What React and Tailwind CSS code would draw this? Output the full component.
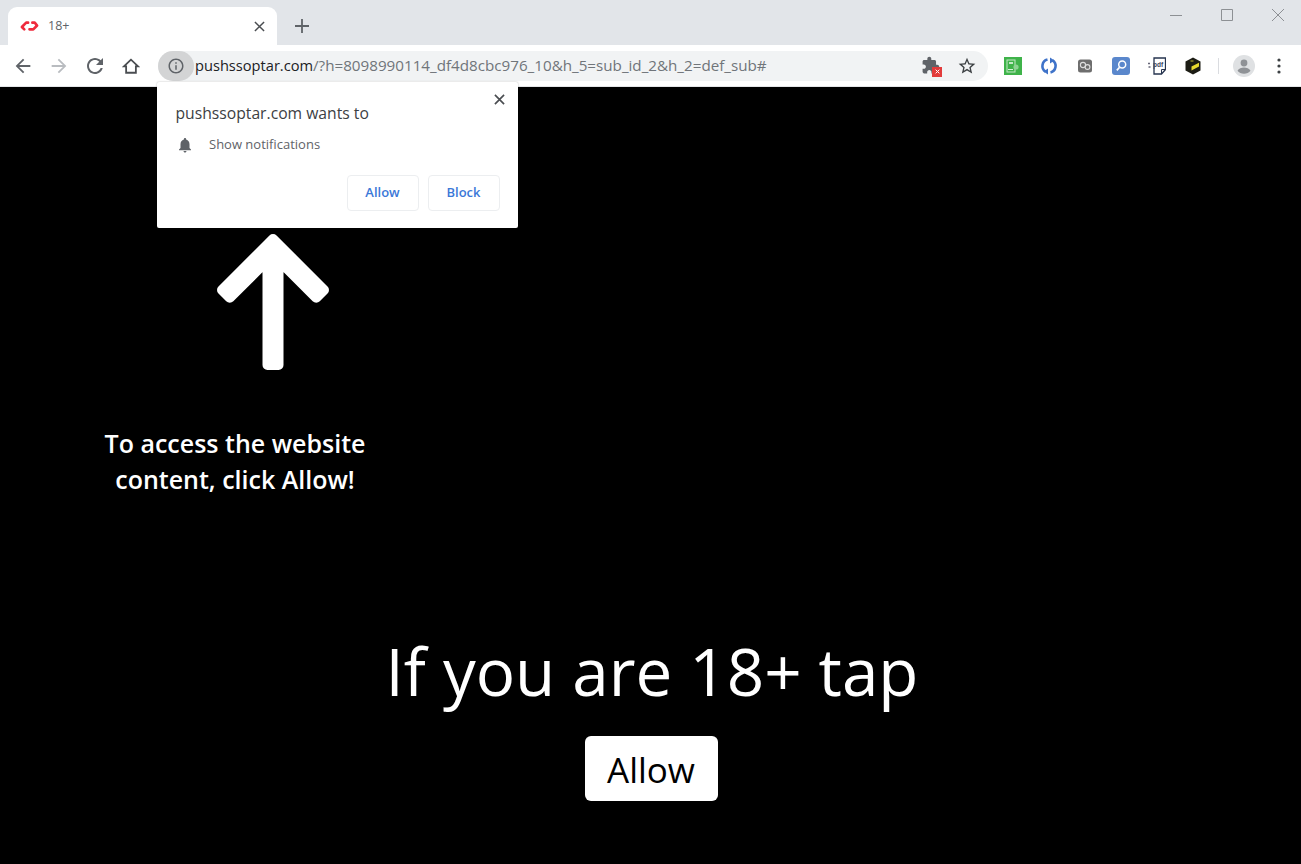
function Mi({ d, className, fill = "currentColor" }) {
  return (
    <svg viewBox="0 0 24 24" className={className} fill={fill}>
      <path d={d} />
    </svg>
  );
}

function Favicon() {
  return (
    <svg viewBox="0 0 20 12" className="w-[19px] h-[12px]" fill="none" strokeWidth="2.8" strokeLinecap="round" strokeLinejoin="round">
      <path d="M8.500 2.500H6.500L2 7l2.500 2.500" stroke="#ef2b3d" />
      <path d="M10 9.500L14 9.500L18 5.500L15.500 2.500H13" stroke="#ef2b3d" />
    </svg>
  );
}

function TabStrip() {
  return (
    <div className="h-[45px] bg-[#e2e5e9] flex items-end relative shrink-0">
      <div className="ml-2 w-[269px] h-[38px] bg-white rounded-t-[9px] flex items-center pl-[12px] pr-[12px]">
        <Favicon />
        <span className="ml-[9px] text-[12.5px] text-[#5f6368] font-['Open_Sans',sans-serif]">18+</span>
        <svg viewBox="0 0 12 12" className="ml-auto w-[11px] h-[11px]" stroke="#4a4d51" strokeWidth="1.6" fill="none">
          <path d="M1 1l10 10M11 1L1 11" />
        </svg>
      </div>
      <svg viewBox="0 0 14 14" className="w-[14px] h-[14px] ml-[18px] mb-[12px]" stroke="#5f6368" strokeWidth="1.8" fill="none">
        <path d="M7 0v14M0 7h14" />
      </svg>
      <div className="ml-auto mr-[-2px] self-start flex items-center h-[30px] text-[#8d9094]">
        <div className="w-[51px] flex justify-center">
          <svg viewBox="0 0 12 12" className="w-[12px] h-[12px]" stroke="currentColor" fill="none"><path d="M0 6.500h12" /></svg>
        </div>
        <div className="w-[51px] flex justify-center">
          <svg viewBox="0 0 12 12" className="w-[12px] h-[12px]" stroke="currentColor" fill="none"><path d="M.5.5h11v11H.5z" /></svg>
        </div>
        <div className="w-[51px] flex justify-center">
          <svg viewBox="0 0 12 12" className="w-[12px] h-[12px]" stroke="currentColor" fill="none"><path d="M0 0l12 12M12 0L0 12" /></svg>
        </div>
      </div>
    </div>
  );
}

function Extensions() {
  return (
    <div className="flex items-center ml-[16px]">
      <svg viewBox="0 0 18 18" className="w-[18px] h-[18px]">
        <rect width="18" height="18" fill="#3fb34a" />
        <rect x="3" y="3" width="8" height="12" fill="none" stroke="#c4e8c6" strokeWidth="1" />
        <rect x="5" y="5" width="4" height="2" fill="#c4e8c6" />
        <circle cx="12" cy="10" r="2.600" fill="#8fd394" />
        <path d="M4 12.500h5" stroke="#d7f0d8" />
      </svg>
      <svg viewBox="0 0 18 18" className="w-[18px] h-[18px] ml-[18px]" fill="none">
        <path d="M7.500 2.600A6.600 6.600 0 0 0 5.500 14.600" stroke="#3f73c9" strokeWidth="2.600" />
        <path d="M10.500 15.400A6.600 6.600 0 0 0 12.500 3.400" stroke="#3f73c9" strokeWidth="2.600" />
        <path d="M8 11.500V17.500L3.500 14.500z" fill="#3f73c9" />
        <path d="M10 6.500V.5L14.500 3.500z" fill="#3f73c9" />
      </svg>
      <svg viewBox="0 0 18 18" className="w-[18px] h-[18px] ml-[18px]">
        <rect x="2" y="2.500" width="14" height="13" rx="2.500" fill="#6e6e6e" />
        <circle cx="7" cy="8" r="2.600" fill="none" stroke="#dedede" strokeWidth="1.100" />
        <circle cx="11.500" cy="10" r="2.400" fill="none" stroke="#dedede" strokeWidth="1.100" />
      </svg>
      <svg viewBox="0 0 18 18" className="w-[18px] h-[18px] ml-[18px]">
        <rect width="18" height="18" rx="3" fill="#5a87cc" />
        <circle cx="10.200" cy="7.500" r="3.500" fill="none" stroke="#fff" strokeWidth="1.500" />
        <path d="M7.600 10.200L4.800 13.400" stroke="#fff" strokeWidth="1.700" />
      </svg>
      <svg viewBox="0 0 18 18" className="w-[18px] h-[18px] ml-[18px]" fill="none">
        <path d="M6 1h11.500v11.500l-4 4.500H6z" fill="#fff" stroke="#26344f" strokeWidth="1.300" />
        <path d="M13.500 17v-4.500h4" stroke="#26344f" strokeWidth="1" />
        <text x="5" y="10" fontSize="6.500" fontWeight="700" fill="#3a4660" fontFamily="'Liberation Sans',sans-serif">pdf</text>
        <path d="M0 6.500h2M.5 10h2" stroke="#667" strokeWidth="1.600" />
      </svg>
      <svg viewBox="0 0 18 18" className="w-[18px] h-[18px] ml-[18px]">
        <path d="M9 0.500l7.500 4v9L9 17.500l-7.500-4v-9z" fill="#1c1c14" />
        <path d="M7.500 9.500l7.500-3.800v3.800L7.500 13.500z" fill="#e8d92e" />
        <path d="M6.500 3h3v2h-3z" fill="#6f6a25" />
      </svg>
    </div>
  );
}

function Toolbar() {
  return (
    <div className="h-[42px] bg-white flex items-center shrink-0 border-b border-[#e4e6e8]">
      <Mi className="w-[22px] h-[22px] ml-[12px] text-[#5f6368]" d="M20 11H7.830l5.590-5.590L12 4l-8 8 8 8 1.410-1.410L7.830 13H20v-2z" />
      <Mi className="w-[22px] h-[22px] ml-[14px] text-[#b9bcc0]" d="M12 4l-1.410 1.410L16.170 11H4v2h12.170l-5.580 5.590L12 20l8-8z" />
      <Mi className="w-[24px] h-[24px] ml-[13px] text-[#5f6368]" d="M17.650 6.350C16.200 4.900 14.210 4 12 4c-4.420 0-7.990 3.580-7.990 8s3.570 8 7.990 8c3.730 0 6.840-2.550 7.730-6h-2.080c-.82 2.330-3.040 4-5.650 4-3.310 0-6-2.690-6-6s2.690-6 6-6c1.660 0 3.140.69 4.220 1.780L13 11h7V4l-2.350 2.350z" />
      <svg viewBox="0 0 24 24" className="w-[18px] h-[18px] ml-[15px] mr-[2px]" fill="none" stroke="#4a4d51" strokeWidth="2.400" strokeLinejoin="miter">
        <path d="M12 3.500L2.500 12.500H5.500V21H18.500V12.500H21.500Z" />
      </svg>
      <div className="ml-[16px] w-[830px] h-[30px] bg-[#f1f3f4] rounded-full flex items-center">
        <div className="w-[36px] h-[30px] bg-[#d3d4d5] rounded-full flex items-center justify-center shrink-0">
          <Mi className="w-[18px] h-[18px] text-[#5f6368]" d="M11 7h2v2h-2zm0 4h2v6h-2zm1-9C6.480 2 2 6.480 2 12s4.480 10 10 10 10-4.480 10-10S17.520 2 12 2zm0 18c-4.410 0-8-3.590-8-8s3.590-8 8-8 8 3.590 8 8-3.590 8-8 8z" />
        </div>
        <span className="ml-[1px] text-[15.2px] whitespace-nowrap font-['Open_Sans',sans-serif] text-[#70757a]">
          <span className="text-[#202124] text-[14.63px]">pushssoptar.com</span>/?h=8098990114_df4d8cbc976_10&amp;h_5=sub_id_2&amp;h_2=def_sub#
        </span>
        <div className="ml-auto flex items-center pr-[11px]">
          <div className="relative w-[20px] h-[20px] mr-[16px]">
            <Mi className="w-[19px] h-[19px] text-[#5f6368]" d="M20.500 11H19V7c0-1.100-.9-2-2-2h-4V3.500C13 2.120 11.880 1 10.500 1S8 2.120 8 3.500V5H4c-1.100 0-1.990.9-1.990 2v3.800H3.500c1.490 0 2.700 1.210 2.700 2.700s-1.210 2.700-2.700 2.700H2V20c0 1.100.9 2 2 2h3.800v-1.500c0-1.490 1.210-2.700 2.700-2.700 1.490 0 2.700 1.210 2.700 2.700V22H17c1.100 0 2-.9 2-2v-4h1.500c1.380 0 2.500-1.120 2.500-2.500S21.880 11 20.500 11z" />
            <div className="absolute right-[-1px] bottom-[-1px] w-[10px] h-[10px] bg-[#e23b3b] flex items-center justify-center">
              <svg viewBox="0 0 8 8" className="w-[5px] h-[5px]" stroke="#fff" strokeWidth="1.600"><path d="M1 1l6 6M7 1L1 7" /></svg>
            </div>
          </div>
          <Mi className="w-[20px] h-[20px] text-[#3c4043]" d="M22 9.240l-7.190-.62L12 2 9.190 8.630 2 9.240l5.460 4.730L5.820 21 12 17.270 18.180 21l-1.630-7.030L22 9.240zM12 15.400l-3.760 2.270 1-4.280-3.320-2.880 4.380-.38L12 6.100l1.710 4.040 4.380.38-3.320 2.880 1 4.280L12 15.400z" />
        </div>
      </div>
      <Extensions />
      <div className="w-px h-[16px] bg-[#dadce0] ml-[16px]" />
      <svg viewBox="0 0 22 22" className="w-[22px] h-[22px] ml-[14px]">
        <circle cx="11" cy="11" r="11" fill="#dfe1e3" />
        <circle cx="11" cy="8" r="3.400" fill="#8f9296" />
        <path d="M4.500 15.800c1.200-2.400 4-3.300 6.500-3.300s5.300.9 6.500 3.300c-1.500 1.900-3.900 3-6.500 3s-5-1.100-6.500-3z" fill="#8f9296" />
      </svg>
      <svg viewBox="0 0 4 16" className="w-[4px] h-[16px] ml-[22px]" fill="#3c4043">
        <circle cx="2" cy="2" r="1.600" /><circle cx="2" cy="8" r="1.600" /><circle cx="2" cy="14" r="1.600" />
      </svg>
    </div>
  );
}

function Popup() {
  return (
    <div className="absolute left-[157px] top-[82px] w-[360.5px] h-[146px] bg-white rounded-[2px] shadow-[0_0_2px_rgba(0,0,0,0.3)] font-['Open_Sans',sans-serif]">
      <svg viewBox="0 0 12 12" className="absolute right-[13px] top-[12px] w-[11px] h-[11px]" stroke="#4a4d51" strokeWidth="1.800" fill="none">
        <path d="M1 1l10 10M11 1L1 11" />
      </svg>
      <div className="pl-[18.5px] pt-[20px] text-[15.7px] leading-[22px] text-[#3c4043]">pushssoptar.com wants to</div>
      <div className="flex items-center pl-[19px] mt-[11px]">
        <Mi className="w-[18px] h-[18px] text-[#5f6368]" d="M12 22c1.100 0 2-.9 2-2h-4c0 1.100.9 2 2 2zm6-6v-5c0-3.070-1.630-5.640-4.500-6.320V4c0-.83-.67-1.500-1.500-1.500s-1.500.67-1.500 1.500v.68C7.640 5.360 6 7.920 6 11v5l-2 2v1h16v-1l-2-2z" />
        <span className="ml-[15px] text-[13px] text-[#5f6368]">Show notifications</span>
      </div>
      <div className="flex justify-end gap-[9px] pr-[18px] mt-[20px]">
        <div className="w-[72px] h-[36px] rounded-[4px] border border-[#eceef0] flex items-center justify-center text-[13px] font-semibold text-[#3b78d8]">Allow</div>
        <div className="w-[72px] h-[36px] rounded-[4px] border border-[#eceef0] flex items-center justify-center text-[13px] font-semibold text-[#3b78d8]">Block</div>
      </div>
    </div>
  );
}

export default function App() {
  return (
    <div className="relative w-[1301px] h-[864px] overflow-hidden bg-black flex flex-col">
      <TabStrip />
      <Toolbar />
      <div className="flex-1 bg-black text-white font-['Open_Sans',sans-serif] flex flex-col">
        <svg viewBox="0 0 112 136" className="w-[112px] h-[136px] ml-[217px] mt-[147px]" fill="#fff" stroke="#fff" strokeWidth="10" strokeLinejoin="round">
          <path d="M56 5L5 56L12.780 63.780L50.500 26.060V131H61.500V26.060L99.220 63.780L107 56Z" />
        </svg>
        <div className="w-[300px] ml-[85px] mt-[55px] text-center text-[25px] leading-[36px] font-semibold">
          To access the website<br />content, click Allow!
        </div>
        <div className="text-center text-[65.5px] leading-[80px] mt-[134px] ml-[3px]">If you are 18+ tap</div>
        <div className="self-center ml-[1px] mt-[25px] w-[133px] h-[65px] bg-white rounded-[6px] flex items-center justify-center text-black text-[35px] pt-[3px]">Allow</div>
      </div>
      <Popup />
    </div>
  );
}
